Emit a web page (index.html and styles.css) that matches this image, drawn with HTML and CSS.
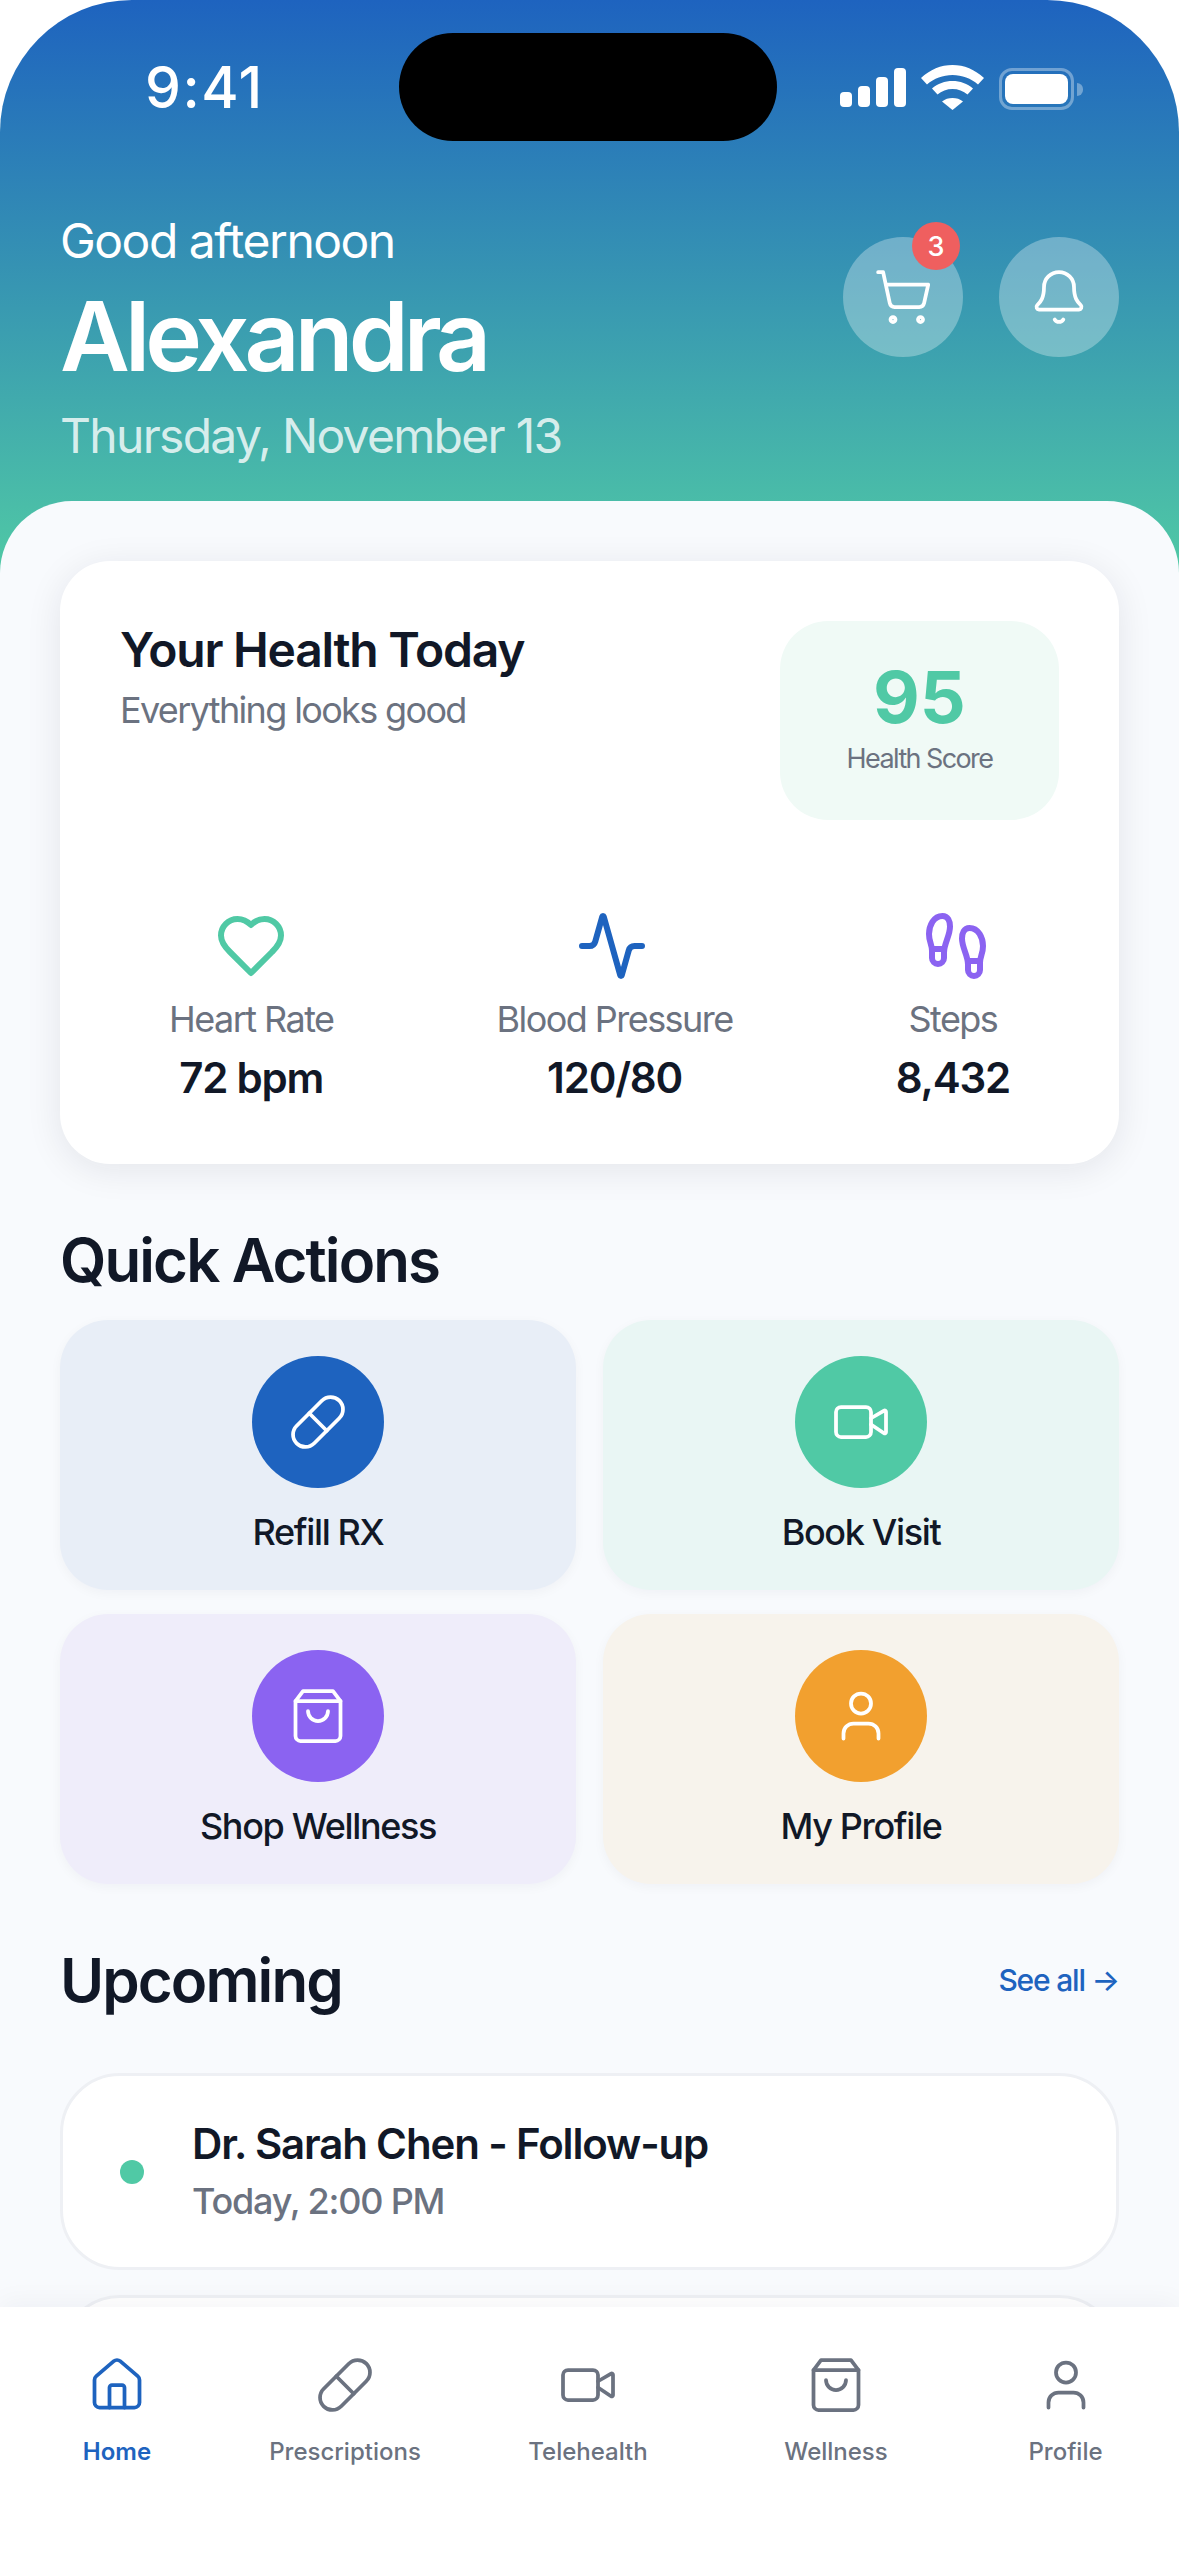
FILE: index.html
```html
<!DOCTYPE html>
<html lang="en">
<head>
    <meta charset="UTF-8">
    <meta name="viewport" content="width=device-width, initial-scale=1.0">
    <title>Health Home</title>
    <link rel="stylesheet" href="styles.css">
</head>
<body>
    <svg class="sprites" width="0" height="0">
        <symbol id="i-cart" viewBox="0 0 24 24">
            <circle cx="8" cy="21" r="1"/><circle cx="19" cy="21" r="1"/>
            <path d="M2.05 2.05h2l2.66 12.42a2 2 0 0 0 2 1.58h9.78a2 2 0 0 0 1.95-1.57l1.65-7.43H5.12"/>
        </symbol>
        <symbol id="i-bell" viewBox="0 0 24 24">
            <path d="M10.268 21a2 2 0 0 0 3.464 0"/>
            <path d="M3.262 15.326A1 1 0 0 0 4 17h16a1 1 0 0 0 .74-1.673C19.41 13.956 18 12.499 18 8A6 6 0 0 0 6 8c0 4.499-1.411 5.956-2.738 7.326"/>
        </symbol>
        <symbol id="i-pill" viewBox="0 0 24 24">
            <path d="m10.5 20.5 10-10a4.95 4.95 0 1 0-7-7l-10 10a4.95 4.95 0 1 0 7 7Z"/>
            <path d="m8.5 8.5 7 7"/>
        </symbol>
        <symbol id="i-video" viewBox="0 0 24 24">
            <path d="m16 13 5.223 3.482a.5.5 0 0 0 .777-.416V7.87a.5.5 0 0 0-.752-.432L16 10.5"/>
            <rect x="2" y="6" width="14" height="12" rx="2"/>
        </symbol>
        <symbol id="i-bag" viewBox="0 0 24 24">
            <path d="M6 2 3 6v14a2 2 0 0 0 2 2h14a2 2 0 0 0 2-2V6l-3-4Z"/>
            <path d="M3 6h18"/>
            <path d="M16 10a4 4 0 0 1-8 0"/>
        </symbol>
        <symbol id="i-user" viewBox="0 0 24 24">
            <path d="M19 21v-2a4 4 0 0 0-4-4H9a4 4 0 0 0-4 4v2"/>
            <circle cx="12" cy="7" r="4"/>
        </symbol>
        <symbol id="i-home" viewBox="0 0 24 24">
            <path d="M15 21v-8a1 1 0 0 0-1-1h-4a1 1 0 0 0-1 1v8"/>
            <path d="M3 10a2 2 0 0 1 .709-1.528l7-5.999a2 2 0 0 1 2.582 0l7 5.999A2 2 0 0 1 21 10v9a2 2 0 0 1-2 2H5a2 2 0 0 1-2-2z"/>
        </symbol>
    </svg>

    <div class="phone">
        <header class="header">
            <div class="island"></div>
            <div class="status-bar">
                <span class="time">9:41</span>
                <div class="status-icons">
                    <div class="signal">
                        <span class="bar bar-1"></span>
                        <span class="bar bar-2"></span>
                        <span class="bar bar-3"></span>
                        <span class="bar bar-4"></span>
                    </div>
                    <svg class="wifi" viewBox="0 0 63 45" width="63" height="45">
                        <path d="M0 13C9 4.500 20 0 31.500 0S54 4.500 63 13l-6 6.500C50 13.500 41 10 31.500 10S13 13.500 6 19.500Z"/>
                        <path d="M11 23.500C16.500 18.500 24 16 31.500 16s15 2.500 20.500 7.500l-5.500 6C42.500 26 37 24 31.500 24s-11 2-15 5.500Z"/>
                        <path d="M21 36.500C24 34 27.500 33 31.500 33s7.500 1 10.500 3.500L31.500 45Z"/>
                    </svg>
                    <div class="battery">
                        <div class="battery-level"></div>
                    </div>
                    <div class="battery-cap"></div>
                </div>
            </div>
            <div class="greeting-row">
                <div class="greeting">
                    <p class="hello">Good afternoon</p>
                    <h1 class="name">Alexandra</h1>
                    <p class="date">Thursday, November 13</p>
                </div>
                <div class="header-buttons">
                    <div class="round-button">
                        <svg class="icon"><use href="#i-cart"/></svg>
                        <span class="badge">3</span>
                    </div>
                    <div class="round-button">
                        <svg class="icon"><use href="#i-bell"/></svg>
                    </div>
                </div>
            </div>
        </header>

        <main class="sheet">
            <section class="health-card">
                <div class="health-top">
                    <div>
                        <h2 class="health-title">Your Health Today</h2>
                        <p class="health-sub">Everything looks good</p>
                    </div>
                    <div class="score-box">
                        <div class="score">95</div>
                        <div class="score-label">Health Score</div>
                    </div>
                </div>
                <div class="stats">
                    <div class="stat">
                        <svg class="stat-icon green" viewBox="0 0 24 24"><path d="M19 14c1.490-1.460 3-3.210 3-5.500A5.500 5.500 0 0 0 16.500 3c-1.760 0-3 .5-4.500 2-1.500-1.500-2.740-2-4.500-2A5.500 5.500 0 0 0 2 8.500c0 2.300 1.500 4.050 3 5.500l7 7Z"/></svg>
                        <span class="stat-label">Heart Rate</span>
                        <span class="stat-value">72 bpm</span>
                    </div>
                    <div class="stat">
                        <svg class="stat-icon blue" viewBox="0 0 24 24"><path d="M22 12h-2.480a2 2 0 0 0-1.930 1.460l-2.350 8.360a.25.25 0 0 1-.48 0L9.240 2.180a.25.25 0 0 0-.48 0l-2.350 8.360A2 2 0 0 1 4.490 12H2"/></svg>
                        <span class="stat-label">Blood Pressure</span>
                        <span class="stat-value">120/80</span>
                    </div>
                    <div class="stat">
                        <svg class="stat-icon purple" viewBox="0 0 24 24">
                            <path d="M4 16v-2.380C4 11.500 2.970 10.500 3 8c.03-2.720 1.490-6 4.500-6C9.370 2 10 3.800 10 5.500c0 3.110-2 5.660-2 8.680V16a2 2 0 1 1-4 0Z"/>
                            <path d="M20 20v-2.380c0-2.120 1.030-3.120 1-5.620-.03-2.720-1.490-6-4.500-6C14.630 6 14 7.800 14 9.500c0 3.110 2 5.660 2 8.680V20a2 2 0 1 0 4 0Z"/>
                            <path d="M16 17h4"/><path d="M4 13h4"/>
                        </svg>
                        <span class="stat-label">Steps</span>
                        <span class="stat-value">8,432</span>
                    </div>
                </div>
            </section>

            <h2 class="section-title quick-title">Quick Actions</h2>
            <section class="actions">
                <div class="action action-blue">
                    <div class="action-circle"><svg class="icon"><use href="#i-pill"/></svg></div>
                    <span class="action-label">Refill RX</span>
                </div>
                <div class="action action-green">
                    <div class="action-circle"><svg class="icon"><use href="#i-video"/></svg></div>
                    <span class="action-label">Book Visit</span>
                </div>
                <div class="action action-purple">
                    <div class="action-circle"><svg class="icon"><use href="#i-bag"/></svg></div>
                    <span class="action-label">Shop Wellness</span>
                </div>
                <div class="action action-orange">
                    <div class="action-circle"><svg class="icon"><use href="#i-user"/></svg></div>
                    <span class="action-label">My Profile</span>
                </div>
            </section>

            <div class="upcoming-head">
                <h2 class="section-title">Upcoming</h2>
                <span class="see-all">See all →</span>
            </div>
            <div class="appointment">
                <span class="dot"></span>
                <div>
                    <div class="appointment-title">Dr. Sarah Chen - Follow-up</div>
                    <div class="appointment-time">Today, 2:00 PM</div>
                </div>
            </div>
            <div class="appointment"></div>
        </main>

        <nav class="tab-bar">
            <div class="tab active">
                <svg class="icon"><use href="#i-home"/></svg>
                <span>Home</span>
            </div>
            <div class="tab">
                <svg class="icon"><use href="#i-pill"/></svg>
                <span>Prescriptions</span>
            </div>
            <div class="tab">
                <svg class="icon"><use href="#i-video"/></svg>
                <span>Telehealth</span>
            </div>
            <div class="tab">
                <svg class="icon"><use href="#i-bag"/></svg>
                <span>Wellness</span>
            </div>
            <div class="tab">
                <svg class="icon"><use href="#i-user"/></svg>
                <span>Profile</span>
            </div>
        </nav>
    </div>
</body>
</html>
```

FILE: styles.css
```css
* {
    box-sizing: border-box;
}
body {
    margin: 0;
    background-color: #ffffff;
    font-family: 'Inter', 'Liberation Sans', sans-serif;
    color: #111827;
}
h1, h2, p {
    margin: 0;
}
.sprites {
    position: absolute;
}
.phone {
    display: flex;
    flex-direction: column;
    width: 1179px;
    height: 2556px;
    overflow: hidden;
    background-color: #ffffff;
}
.icon {
    width: 60px;
    height: 60px;
    fill: none;
    stroke: currentColor;
    stroke-width: 1.5;
    stroke-linecap: round;
    stroke-linejoin: round;
}

/* header */
.header {
    position: relative;
    flex: none;
    height: 573px;
    padding: 0 60px;
    color: #ffffff;
    background: linear-gradient(180deg, #1e63bf 0%, #50c9a5 100%);
    border-radius: 132px 132px 0 0;
}
.island {
    position: absolute;
    top: 33px;
    left: 399px;
    width: 378px;
    height: 108px;
    background-color: #000000;
    border-radius: 54px;
}
.status-bar {
    display: flex;
    justify-content: space-between;
    align-items: center;
    height: 174px;
    margin-bottom: 37px;
    padding: 0 0 0 85px;
}
.time {
    font-size: 57px;
    font-weight: 500;
    letter-spacing: 1.5px;
}
.status-icons {
    display: flex;
    align-items: flex-end;
    height: 45px;
    margin-right: 36px;
}
.signal {
    display: flex;
    align-items: flex-end;
    gap: 6px;
    margin-right: 15px;
    margin-bottom: 3px;
}
.bar {
    width: 12px;
    background-color: #ffffff;
    border-radius: 4px;
}
.bar-1 { height: 15px; }
.bar-2 { height: 21px; }
.bar-3 { height: 30px; }
.bar-4 { height: 39px; }
.wifi {
    fill: #ffffff;
    margin-right: 15px;
}
.battery {
    width: 75px;
    height: 42px;
    padding: 3px;
    border: 3px solid rgba(255, 255, 255, 0.35);
    border-radius: 13px;
}
.battery-level {
    height: 100%;
    background-color: #ffffff;
    border-radius: 8px;
}
.battery-cap {
    width: 6px;
    height: 13px;
    margin: 0 0 14px 3px;
    background-color: rgba(255, 255, 255, 0.35);
    border-radius: 0 6px 6px 0;
}
.greeting-row {
    display: flex;
    justify-content: space-between;
    align-items: flex-start;
}
.hello {
    font-size: 48px;
    line-height: 60px;
    letter-spacing: -1.5px;
}
.name {
    font-size: 96px;
    font-weight: 600;
    line-height: 120px;
    margin-top: 5px;
    letter-spacing: -4.9px;
}
.date {
    font-size: 48px;
    line-height: 60px;
    margin-top: 10px;
    letter-spacing: -1.7px;
    color: rgba(255, 255, 255, 0.8);
}
.header-buttons {
    display: flex;
    gap: 36px;
    margin-top: 26px;
}
.round-button {
    position: relative;
    display: flex;
    justify-content: center;
    align-items: center;
    width: 120px;
    height: 120px;
    background-color: rgba(255, 255, 255, 0.3);
    border-radius: 50%;
}
.badge {
    position: absolute;
    top: -15px;
    right: 3px;
    display: flex;
    justify-content: center;
    align-items: center;
    width: 48px;
    height: 48px;
    font-size: 27px;
    font-weight: 500;
    background-color: #ef5f5f;
    border-radius: 50%;
}

/* sheet */
.sheet {
    flex: 1;
    min-height: 0;
    margin-top: -72px;
    padding: 60px 60px 0;
    overflow: hidden;
    position: relative;
    background-color: #f8fafd;
    border-radius: 72px 72px 0 0;
}
.health-card {
    height: 603px;
    padding: 60px;
    background-color: #ffffff;
    border-radius: 50px;
    box-shadow: 0 6px 36px rgba(17, 24, 39, 0.09);
}
.health-top {
    display: flex;
    justify-content: space-between;
    align-items: flex-start;
}
.health-title {
    font-size: 48px;
    font-weight: 600;
    line-height: 60px;
    margin-top: -1px;
    letter-spacing: -1.25px;
}
.health-sub {
    font-size: 36px;
    line-height: 48px;
    margin-top: 6px;
    letter-spacing: -1.65px;
    color: #6b7280;
}
.score-box {
    display: flex;
    flex-direction: column;
    align-items: center;
    width: 279px;
    height: 199px;
    padding-top: 34px;
    background-color: #f0faf6;
    border-radius: 48px;
}
.score {
    font-size: 72px;
    font-weight: 700;
    line-height: 84px;
    color: #50c9a5;
}
.score-label {
    font-size: 27px;
    line-height: 36px;
    margin-top: 2px;
    letter-spacing: -1.6px;
    color: #6b7280;
}
.stats {
    display: flex;
    justify-content: space-between;
    padding: 0 49px;
    margin-top: 90px;
}
.stat {
    display: flex;
    flex-direction: column;
    align-items: center;
}
.stat-icon {
    width: 72px;
    height: 72px;
    fill: none;
    stroke-width: 2;
    stroke-linecap: round;
    stroke-linejoin: round;
}
.green { stroke: #50c9a5; }
.blue { stroke: #1e63bf; margin-right: 6px; }
.purple { stroke: #8b63f1; margin-left: 6px; }
.stat-label {
    font-size: 36px;
    line-height: 48px;
    margin-top: 13px;
    letter-spacing: -1.55px;
    color: #6b7280;
}
.stat-value {
    font-size: 42px;
    font-weight: 600;
    line-height: 54px;
    margin-top: 8px;
    letter-spacing: -1.2px;
}
.section-title {
    font-size: 60px;
    font-weight: 600;
    line-height: 72px;
    letter-spacing: -1.9px;
}
.quick-title {
    margin-top: 60px;
}

/* quick actions */
.actions {
    display: grid;
    grid-template-columns: 1fr 1fr;
    gap: 24px 27px;
    margin-top: 24px;
}
.action {
    display: flex;
    flex-direction: column;
    align-items: center;
    height: 270px;
    padding-top: 36px;
    border-radius: 48px;
    box-shadow: 0 3px 12px rgba(17, 24, 39, 0.04);
}
.action-blue { background-color: #e8eef7; }
.action-green { background-color: #e9f6f4; }
.action-purple { background-color: #efedfa; }
.action-orange { background-color: #f7f3ec; }
.action-circle {
    display: flex;
    justify-content: center;
    align-items: center;
    width: 132px;
    height: 132px;
    color: #ffffff;
    border-radius: 50%;
}
.action-blue .action-circle { background-color: #1e63bf; }
.action-green .action-circle { background-color: #50c9a5; }
.action-purple .action-circle { background-color: #8b63f1; }
.action-orange .action-circle { background-color: #f2a02f; }
.action-label {
    font-size: 36px;
    font-weight: 500;
    line-height: 48px;
    margin-top: 20px;
    letter-spacing: -1.35px;
}

/* upcoming */
.upcoming-head {
    display: flex;
    justify-content: space-between;
    align-items: center;
    margin-top: 60px;
}
.see-all {
    font-size: 30px;
    font-weight: 500;
    letter-spacing: -1.2px;
    color: #1e63bf;
}
.appointment {
    display: flex;
    align-items: center;
    gap: 48px;
    height: 197px;
    margin-top: 25px;
    padding: 0 57px;
    background-color: #ffffff;
    border: 3px solid #eef0f4;
    border-radius: 60px;
}
.upcoming-head + .appointment {
    margin-top: 57px;
}
.dot {
    width: 24px;
    height: 24px;
    background-color: #50c9a5;
    border-radius: 50%;
}
.appointment-title {
    font-size: 42px;
    font-weight: 600;
    line-height: 54px;
    margin-top: -2px;
    letter-spacing: -1.15px;
}
.appointment-time {
    font-size: 36px;
    font-weight: 500;
    line-height: 48px;
    margin-top: 6px;
    letter-spacing: -1.2px;
    color: #6b7280;
}

/* tab bar */
.tab-bar {
    position: relative;
    flex: none;
    display: grid;
    grid-template-columns: 234px 222px 264px 232px 227px;
    height: 249px;
    padding-top: 48px;
    background-color: #ffffff;
    box-shadow: 0 -6px 24px rgba(17, 24, 39, 0.04);
}
.tab {
    display: flex;
    flex-direction: column;
    align-items: center;
    gap: 22px;
    font-size: 24px;
    font-weight: 500;
    line-height: 30px;
    color: #6b7280;
}
.tab.active {
    color: #1e63bf;
}
.tab.active span {
    font-weight: 600;
}
```
